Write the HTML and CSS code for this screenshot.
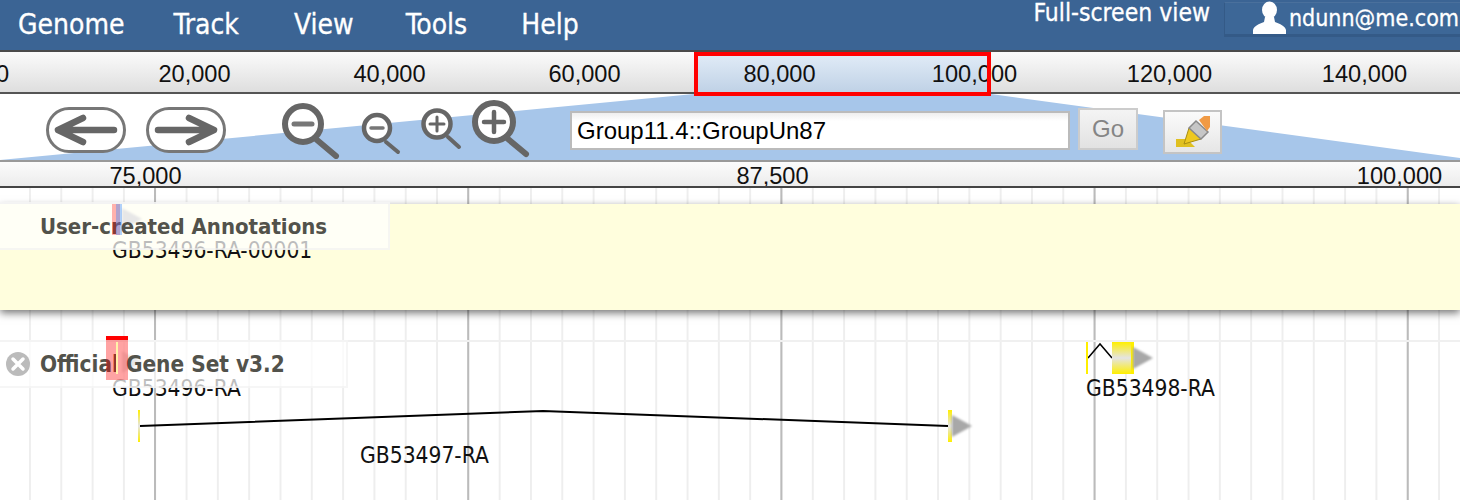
FILE: index.html
```html
<!DOCTYPE html>
<html lang="en">
<head>
    <meta charset="UTF-8">
    <meta name="viewport" content="width=device-width, initial-scale=1.0">
    <title>Genome browser</title>
    <link rel="stylesheet" href="styles.css">
</head>
<body>
    <div class="menubar">
        <a class="menu-item menu-genome">Genome</a>
        <a class="menu-item menu-track">Track</a>
        <a class="menu-item menu-view">View</a>
        <a class="menu-item menu-tools">Tools</a>
        <a class="menu-item">Help</a>
        <a class="fullscreen">Full-screen view</a>
        <div class="user-box">
            <svg class="user-icon" width="33" height="33" viewBox="0 0 33 33">
                <ellipse cx="16.5" cy="9" rx="7.5" ry="8.5" fill="#fff"/>
                <path d="M12 16 L21 16 L22 21 C27 23 32 25 33 29 L33 33 L0 33 L0 29 C1 25 6 23 11 21 Z" fill="#fff"/>
            </svg>
            <span>ndunn@me.com</span>
        </div>
    </div>

    <div class="overview">
        <div class="overview-fill"></div>
        <div class="overview-labels">
            <span class="overview-tick overview-tick-zero">0</span>
            <span class="overview-tick">20,000</span>
            <span class="overview-tick">40,000</span>
            <span class="overview-tick">60,000</span>
            <span class="overview-tick">80,000</span>
            <span class="overview-tick">100,000</span>
            <span class="overview-tick">120,000</span>
            <span class="overview-tick">140,000</span>
        </div>
        <div class="overview-window"></div>
    </div>

    <div class="navbar">
        <svg class="nav-zoom-shape" width="1460" height="66" viewBox="0 0 1460 66">
            <polygon points="0,66 694,0 991,0 1460,64 1460,66" fill="#a7c6ea"/>
        </svg>

        <svg class="nav-icon nav-back" width="80" height="65" viewBox="0 0 80 65">
            <rect x="1.5" y="14.5" width="77" height="43" rx="21.5" fill="#fff" stroke="#777" stroke-width="3"/>
            <path d="M68 36 H13 M37 24 L12 36 L37 48" fill="none" stroke="#666" stroke-width="6.5" stroke-linecap="round" stroke-linejoin="round"/>
        </svg>
        <svg class="nav-icon nav-forward" width="80" height="65" viewBox="0 0 80 65">
            <rect x="1.5" y="14.5" width="77" height="43" rx="21.5" fill="#fff" stroke="#777" stroke-width="3"/>
            <path d="M12 36 H67 M43 24 L68 36 L43 48" fill="none" stroke="#666" stroke-width="6.5" stroke-linecap="round" stroke-linejoin="round"/>
        </svg>

        <svg class="nav-icon nav-zoom-big-out" width="60" height="65" viewBox="0 0 60 65">
            <path d="M36 46 L55 62" stroke="#666" stroke-width="6" stroke-linecap="round"/>
            <circle cx="22" cy="30" r="18" fill="#fff" stroke="#666" stroke-width="6"/>
            <path d="M13 30 H31" stroke="#777" stroke-width="5" stroke-linecap="round"/>
        </svg>
        <svg class="nav-icon nav-zoom-small" width="42" height="65" viewBox="0 0 42 65">
            <path d="M26 48 L38 58" stroke="#666" stroke-width="4" stroke-linecap="round"/>
            <circle cx="17" cy="34" r="13" fill="#fff" stroke="#666" stroke-width="4.5"/>
            <path d="M11 34 H23" stroke="#777" stroke-width="3.5" stroke-linecap="round"/>
        </svg>
        <svg class="nav-icon nav-zoom-small" width="42" height="65" viewBox="0 0 42 65">
            <path d="M27 43 L38 53" stroke="#666" stroke-width="4" stroke-linecap="round"/>
            <circle cx="16" cy="30" r="13.5" fill="#fff" stroke="#666" stroke-width="4.5"/>
            <path d="M9 30 H23 M16 23 V37" stroke="#666" stroke-width="3" stroke-linecap="round"/>
        </svg>
        <svg class="nav-icon nav-zoom-big-in" width="60" height="65" viewBox="0 0 60 65">
            <path d="M37 45 L55 60" stroke="#666" stroke-width="6" stroke-linecap="round"/>
            <circle cx="23" cy="28" r="19" fill="#fff" stroke="#666" stroke-width="6"/>
            <path d="M13 28 H33 M23 18 V38" stroke="#666" stroke-width="4.5" stroke-linecap="round"/>
        </svg>

        <input class="location" type="text" value="Group11.4::GroupUn87">
        <button class="go-btn" type="button">Go</button>
        <button class="highlight-btn" type="button">
            <svg width="36" height="34" viewBox="0 0 36 34">
                <path d="M1 24 H12 L20 32 H1 Z" fill="#e0c020"/>
                <path d="M9 29 L14 13 L26 24 Z" fill="#eec81f" stroke="#a78d12" stroke-width="1"/>
                <path d="M14 13 L21 6 L33 17 L26 24 Z" fill="#c6c6c6" stroke="#8a8a8a" stroke-width="1.5"/>
                <path d="M24 5 L29 1 H35 V12 L32 16 Z" fill="#f09a45"/>
            </svg>
        </button>
    </div>

    <div class="ruler">
        <span class="ruler-tick">75,000</span>
        <span class="ruler-tick">87,500</span>
        <span class="ruler-tick">100,000</span>
    </div>

    <div class="tracks">
        <div class="annotation-band"></div>
        <div class="track-divider"></div>

        <!-- user-created annotations -->
        <div class="feat-arrow user-arrow"></div>
        <div class="gene-name name-user">GB53496-RA-00001</div>
        <div class="track-label label-user">User-created Annotations</div>
        <div class="feat user-exon"></div>
        <div class="feat user-exon-cds"></div>

        <!-- official gene set -->
        <div class="feat-arrow selected-arrow"></div>
        <div class="gene-name name-496">GB53496-RA</div>

        <svg class="intron-lines" width="1460" height="312" viewBox="0 0 1460 312">
            <path d="M140 238 L543 223 L948 238" fill="none" stroke="#000" stroke-width="2"/>
            <path d="M1088 170 L1100 156 L1112 170" fill="none" stroke="#000" stroke-width="1.5"/>
        </svg>
        <div class="feat cds cds-497a"></div>
        <div class="feat cds cds-497b"></div>
        <div class="feat-arrow arrow-497"></div>
        <div class="gene-name name-497">GB53497-RA</div>

        <div class="feat cds cds-498a"></div>
        <div class="feat cds cds-498b"></div>
        <div class="feat-arrow arrow-498"></div>
        <div class="gene-name name-498">GB53498-RA</div>

        <div class="track-label label-official">
            <svg class="label-close" width="24" height="24" viewBox="0 0 24 24">
                <circle cx="12" cy="12" r="12" fill="#bbb"/>
                <path d="M7 7 L17 17 M17 7 L7 17" stroke="#fff" stroke-width="3.5" stroke-linecap="round"/>
            </svg>
            Official Gene Set v3.2
        </div>
        <div class="feat selected-bar"></div>
        <div class="feat selected-exon"></div>
        <div class="feat selected-line"></div>
    </div>
</body>
</html>
```

FILE: styles.css
```css
html, body {
    margin: 0;
    padding: 0;
    height: 500px;
    overflow: hidden;
    background-color: #fff;
}
body {
    display: flex;
    flex-direction: column;
    font-family: "Liberation Sans", Arial, sans-serif;
}

/* top menu */
.menubar {
    display: flex;
    height: 52px;
    flex: none;
    padding-left: 18px;
    box-sizing: border-box;
    background-color: #3b6494;
    border-bottom: 2px solid #4b4b4b;
    color: #fff;
    font-family: "DejaVu Sans Condensed", "DejaVu Sans", sans-serif;
    font-stretch: condensed;
    -webkit-text-stroke: 0.3px #fff;
}
.menu-item {
    font-size: 28px;
    line-height: 50px;
}
.menu-genome { margin-right: 49px; }
.menu-track { margin-right: 55px; }
.menu-view { margin-right: 52px; }
.menu-tools { margin-right: 54px; }
.fullscreen {
    margin-left: auto;
    font-size: 24.5px;
    line-height: 25px;
}
.user-box {
    display: flex;
    align-items: flex-end;
    width: 236px;
    height: 35px;
    margin: 2px 0 0 14px;
    padding-left: 28px;
    box-sizing: border-box;
    background-color: #3d6797;
    border-left: 1px solid #345a87;
    border-top: 1px solid #4a709c;
    border-bottom: 3px solid #345a87;
    font-size: 23px;
    line-height: 31px;
    white-space: nowrap;
}
.user-icon {
    flex: none;
    margin-right: 3px;
}

/* whole-reference overview */
.overview {
    position: relative;
    z-index: 1;
    height: 42px;
    flex: none;
    box-sizing: border-box;
    background: linear-gradient(#fbfbfb, #dedede);
    border-bottom: 2px solid #555;
}
.overview-labels {
    position: relative;
    display: flex;
    margin-left: -98px;
    line-height: 44px;
    font-size: 23.6px;
    color: #111;
}
.overview-tick {
    flex: none;
    width: 195px;
    text-align: center;
}
.overview-tick-zero {
    width: 189px;
    margin-left: 6px;
}
.overview-fill {
    position: absolute;
    left: 694px;
    top: 0;
    width: 297px;
    height: 44px;
    background: linear-gradient(#e3edf8, #bccfe4);
}
.overview-window {
    position: absolute;
    left: 694px;
    top: 0;
    width: 297px;
    height: 44px;
    box-sizing: border-box;
    border: 4px solid #f00;
}

/* navigation row */
.navbar {
    position: relative;
    display: flex;
    align-items: flex-start;
    height: 68px;
    flex: none;
    padding-left: 46px;
    box-sizing: border-box;
    border-bottom: 2px solid #999;
}
.nav-zoom-shape {
    position: absolute;
    left: 0;
    top: 0;
}
.nav-icon {
    position: relative;
    flex: none;
}
.nav-forward { margin-left: 20px; }
.nav-zoom-big-out { margin-left: 55px; }
.nav-zoom-small { margin-left: 19px; }
.nav-zoom-big-in { margin-left: 8px; }
.location {
    position: relative;
    width: 500px;
    height: 39px;
    margin: 17px 0 0 39px;
    padding: 0 5px;
    box-sizing: border-box;
    border: 2px solid #bbb;
    background: linear-gradient(#eee, #fff 8px);
    font-family: "Liberation Sans", Arial, sans-serif;
    font-size: 24px;
    color: #000;
}
.go-btn {
    position: relative;
    width: 60px;
    height: 42px;
    margin: 14px 0 0 8px;
    padding: 0;
    box-sizing: border-box;
    border: 2px solid #ccc;
    background: linear-gradient(#f4f4f4, #e2e2e2);
    font-family: "Liberation Sans", Arial, sans-serif;
    font-size: 24px;
    color: #858585;
}
.highlight-btn {
    position: relative;
    display: flex;
    align-items: center;
    justify-content: center;
    width: 59px;
    height: 44px;
    margin: 16px 0 0 25px;
    padding: 0;
    box-sizing: border-box;
    border: 2px solid #c4c4c4;
    background: linear-gradient(#fbfbfb, #e6e6e6);
}

/* detail ruler */
.ruler {
    display: flex;
    height: 27px;
    flex: none;
    margin-top: -1px;
    box-sizing: border-box;
    background: linear-gradient(#fcfcfc, #ececec);
    border-bottom: 2px solid #444;
    overflow: hidden;
    font-size: 23.6px;
    line-height: 30px;
    color: #111;
}
.ruler-tick {
    flex: none;
    width: 627px;
    text-align: center;
}
.ruler-tick:first-child { margin-left: -168px; }

/* track area with the grid behind it */
.tracks {
    position: relative;
    flex: 1;
    overflow: hidden;
    background-color: #fff;
    background-image:
        linear-gradient(90deg, #bbb 2px, transparent 2px),
        linear-gradient(90deg, #eee 2px, transparent 2px);
    background-size: 313.2px 100%, 31.32px 100%;
    background-position: 154px 0, 29px 0;
}
.annotation-band {
    height: 106px;
    margin-top: 16px;
    background-color: #fffedd;
    box-shadow: 0 3px 8px rgba(0, 0, 0, 0.55);
}
.track-divider {
    height: 2px;
    margin-top: 30px;
    background-color: #f0f0f0;
}
.track-label {
    position: absolute;
    left: 0;
    display: flex;
    align-items: center;
    height: 48px;
    padding-left: 40px;
    box-sizing: border-box;
    background-color: rgba(255, 255, 255, 0.72);
    border: 2px solid rgba(240, 240, 240, 0.6);
    border-left: none;
    color: #52524b;
    font-family: "DejaVu Sans Condensed", "DejaVu Sans", sans-serif;
    font-stretch: condensed;
    font-weight: bold;
    font-size: 22px;
    white-space: nowrap;
}
.label-user {
    top: 14px;
    width: 390px;
}
.label-official {
    top: 152px;
    width: 348px;
    font-size: 22.4px;
}
.label-close {
    position: absolute;
    left: 6px;
    top: 10px;
}
.gene-name {
    position: absolute;
    color: #111;
    font-family: "DejaVu Sans Condensed", "DejaVu Sans", sans-serif;
    font-stretch: condensed;
    font-size: 22.6px;
    line-height: 24px;
    white-space: nowrap;
}
.name-user { left: 112px; top: 50px; }
.name-496 { left: 112px; top: 188px; }
.name-497 { left: 360px; top: 255px; }
.name-498 { left: 1086px; top: 188px; }

/* features */
.intron-lines {
    position: absolute;
    left: 0;
    top: 0;
}
.feat {
    position: absolute;
}
.feat-arrow {
    position: absolute;
    width: 0;
    height: 0;
    border-top: 11px solid transparent;
    border-bottom: 11px solid transparent;
    border-left: 20px solid #a8a8a8;
    filter: blur(1px);
}
.user-exon {
    left: 112px;
    top: 16px;
    width: 8px;
    height: 31px;
    background-color: rgba(255, 0, 0, 0.3);
}
.user-exon-cds {
    left: 116px;
    top: 16px;
    width: 6px;
    height: 31px;
    background-color: rgba(60, 140, 255, 0.4);
}
.user-arrow {
    left: 122px;
    top: 20px;
}
.selected-bar {
    left: 106px;
    top: 148px;
    width: 22px;
    height: 4px;
    background-color: #f00;
}
.selected-exon {
    left: 106px;
    top: 152px;
    width: 22px;
    height: 40px;
    background-color: rgba(255, 0, 0, 0.36);
}
.selected-line {
    left: 116px;
    top: 154px;
    width: 2px;
    height: 32px;
    background-color: #fff3a8;
}
.selected-arrow {
    left: 122px;
    top: 163px;
}
.cds {
    background: linear-gradient(#ffef00, #e4e4e4 50%, #ffef00);
}
.cds-497a {
    left: 138px;
    top: 222px;
    width: 2px;
    height: 32px;
}
.cds-497b {
    left: 948px;
    top: 222px;
    width: 4px;
    height: 32px;
}
.arrow-497 {
    left: 952px;
    top: 227px;
}
.cds-498a {
    left: 1086px;
    top: 154px;
    width: 2px;
    height: 32px;
    background: #ffef00;
}
.cds-498b {
    left: 1112px;
    top: 154px;
    width: 22px;
    height: 32px;
    box-sizing: border-box;
    border-right: 3px solid #ffef00;
}
.arrow-498 {
    left: 1133px;
    top: 159px;
}
```
